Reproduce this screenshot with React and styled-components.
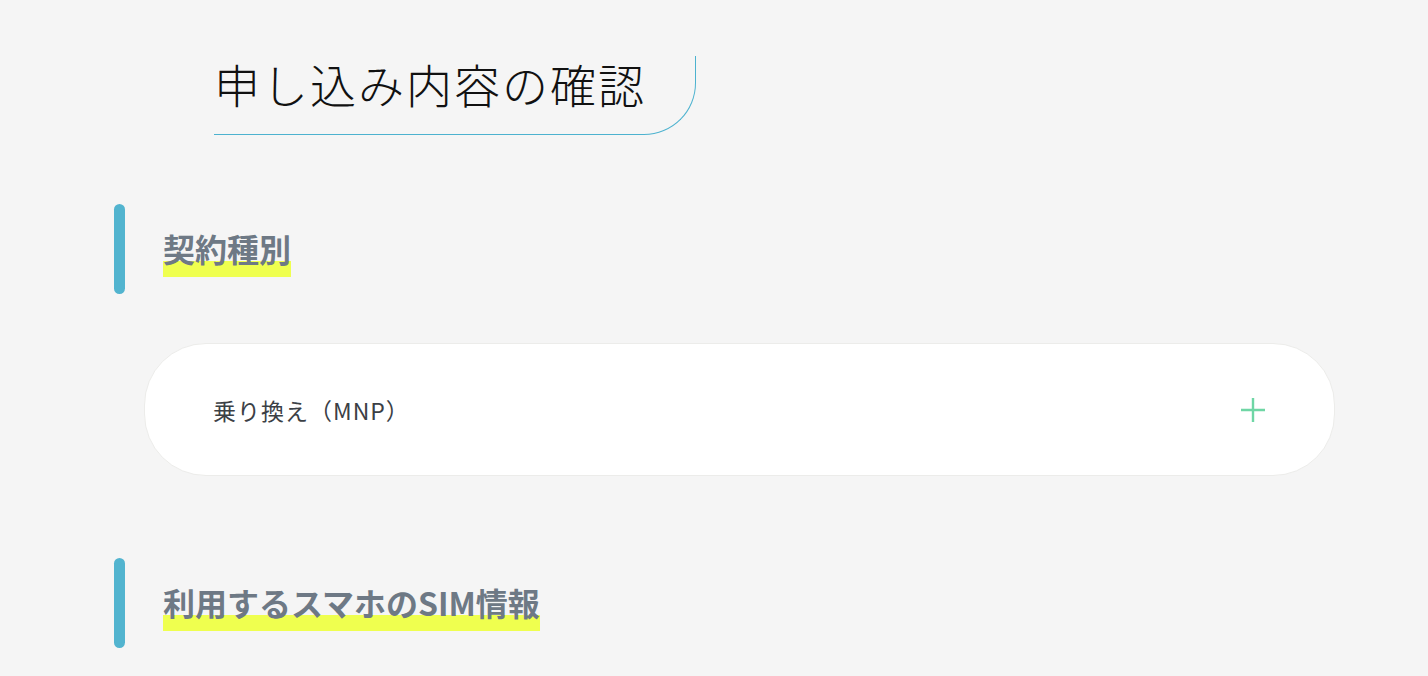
import * as React from "react"
import styled, { createGlobalStyle } from 'styled-components';

const GlobalStyle = createGlobalStyle`
  html, body {
    margin: 0;
    padding: 0;
    background: #f5f5f5;
  }
  body {
    font-family: "Noto Sans CJK JP", "Noto Sans", sans-serif;
  }
`;

const Page = styled.main`
  padding: 56px 93px 40px 114px;
  min-height: 676px;
  box-sizing: border-box;
`;

const TitleBox = styled.div`
  display: inline-block;
  margin-left: 100px;
  padding: 4px 49px 28px 0;
  border-right: 1.5px solid #4cb2cf;
  border-bottom: 1.5px solid #4cb2cf;
  border-bottom-right-radius: 52px;
`;

const Title = styled.h1`
  margin: 0;
  font-size: 46px;
  line-height: 46px;
  font-weight: 300;
  letter-spacing: 2px;
  color: #111;
`;

const Section = styled.section`
  margin-top: ${props => props.gap || '69px'};
`;

const HeadingRow = styled.div`
  display: flex;
  align-items: flex-start;
  gap: 38px;
  height: 90px;
`;

const Bar = styled.span`
  display: block;
  width: 11px;
  height: 90px;
  border-radius: 6px;
  background: #52b4cf;
`;

const HeadingText = styled.h2`
  margin: 28px 0 0;
  display: inline-block;
  font-size: 32px;
  line-height: 32px;
  font-weight: 700;
  color: #6e7985;
  padding-bottom: 13px;
  background: linear-gradient(transparent 29px, #efff4f 29px);
`;

const Card = styled.div`
  margin: 49px 0 0 30px;
  height: 133px;
  box-sizing: border-box;
  display: flex;
  align-items: center;
  justify-content: space-between;
  padding: 0 69px 0 68px;
  background: #fff;
  border: 1px solid #ececea;
  border-radius: 62px;
`;

const CardLabel = styled.span`
  font-size: 23px;
  color: #3b4045;
  letter-spacing: 1px;
`;

const PlusIcon = () => (
  <svg width="24" height="24" viewBox="0 0 24 24">
    <path d="M12 0v24M0 12h24" stroke="#6fd6a5" strokeWidth="2.4" fill="none" />
  </svg>
);

const App = () => {
  return (
    <Page>
      <GlobalStyle />
      <TitleBox>
        <Title>申し込み内容の確認</Title>
      </TitleBox>
      <Section>
        <HeadingRow>
          <Bar />
          <HeadingText>契約種別</HeadingText>
        </HeadingRow>
        <Card>
          <CardLabel>乗り換え（MNP）</CardLabel>
          <PlusIcon />
        </Card>
      </Section>
      <Section gap="82px">
        <HeadingRow>
          <Bar />
          <HeadingText>利用するスマホのSIM情報</HeadingText>
        </HeadingRow>
      </Section>
    </Page>
  )
}

export default App
